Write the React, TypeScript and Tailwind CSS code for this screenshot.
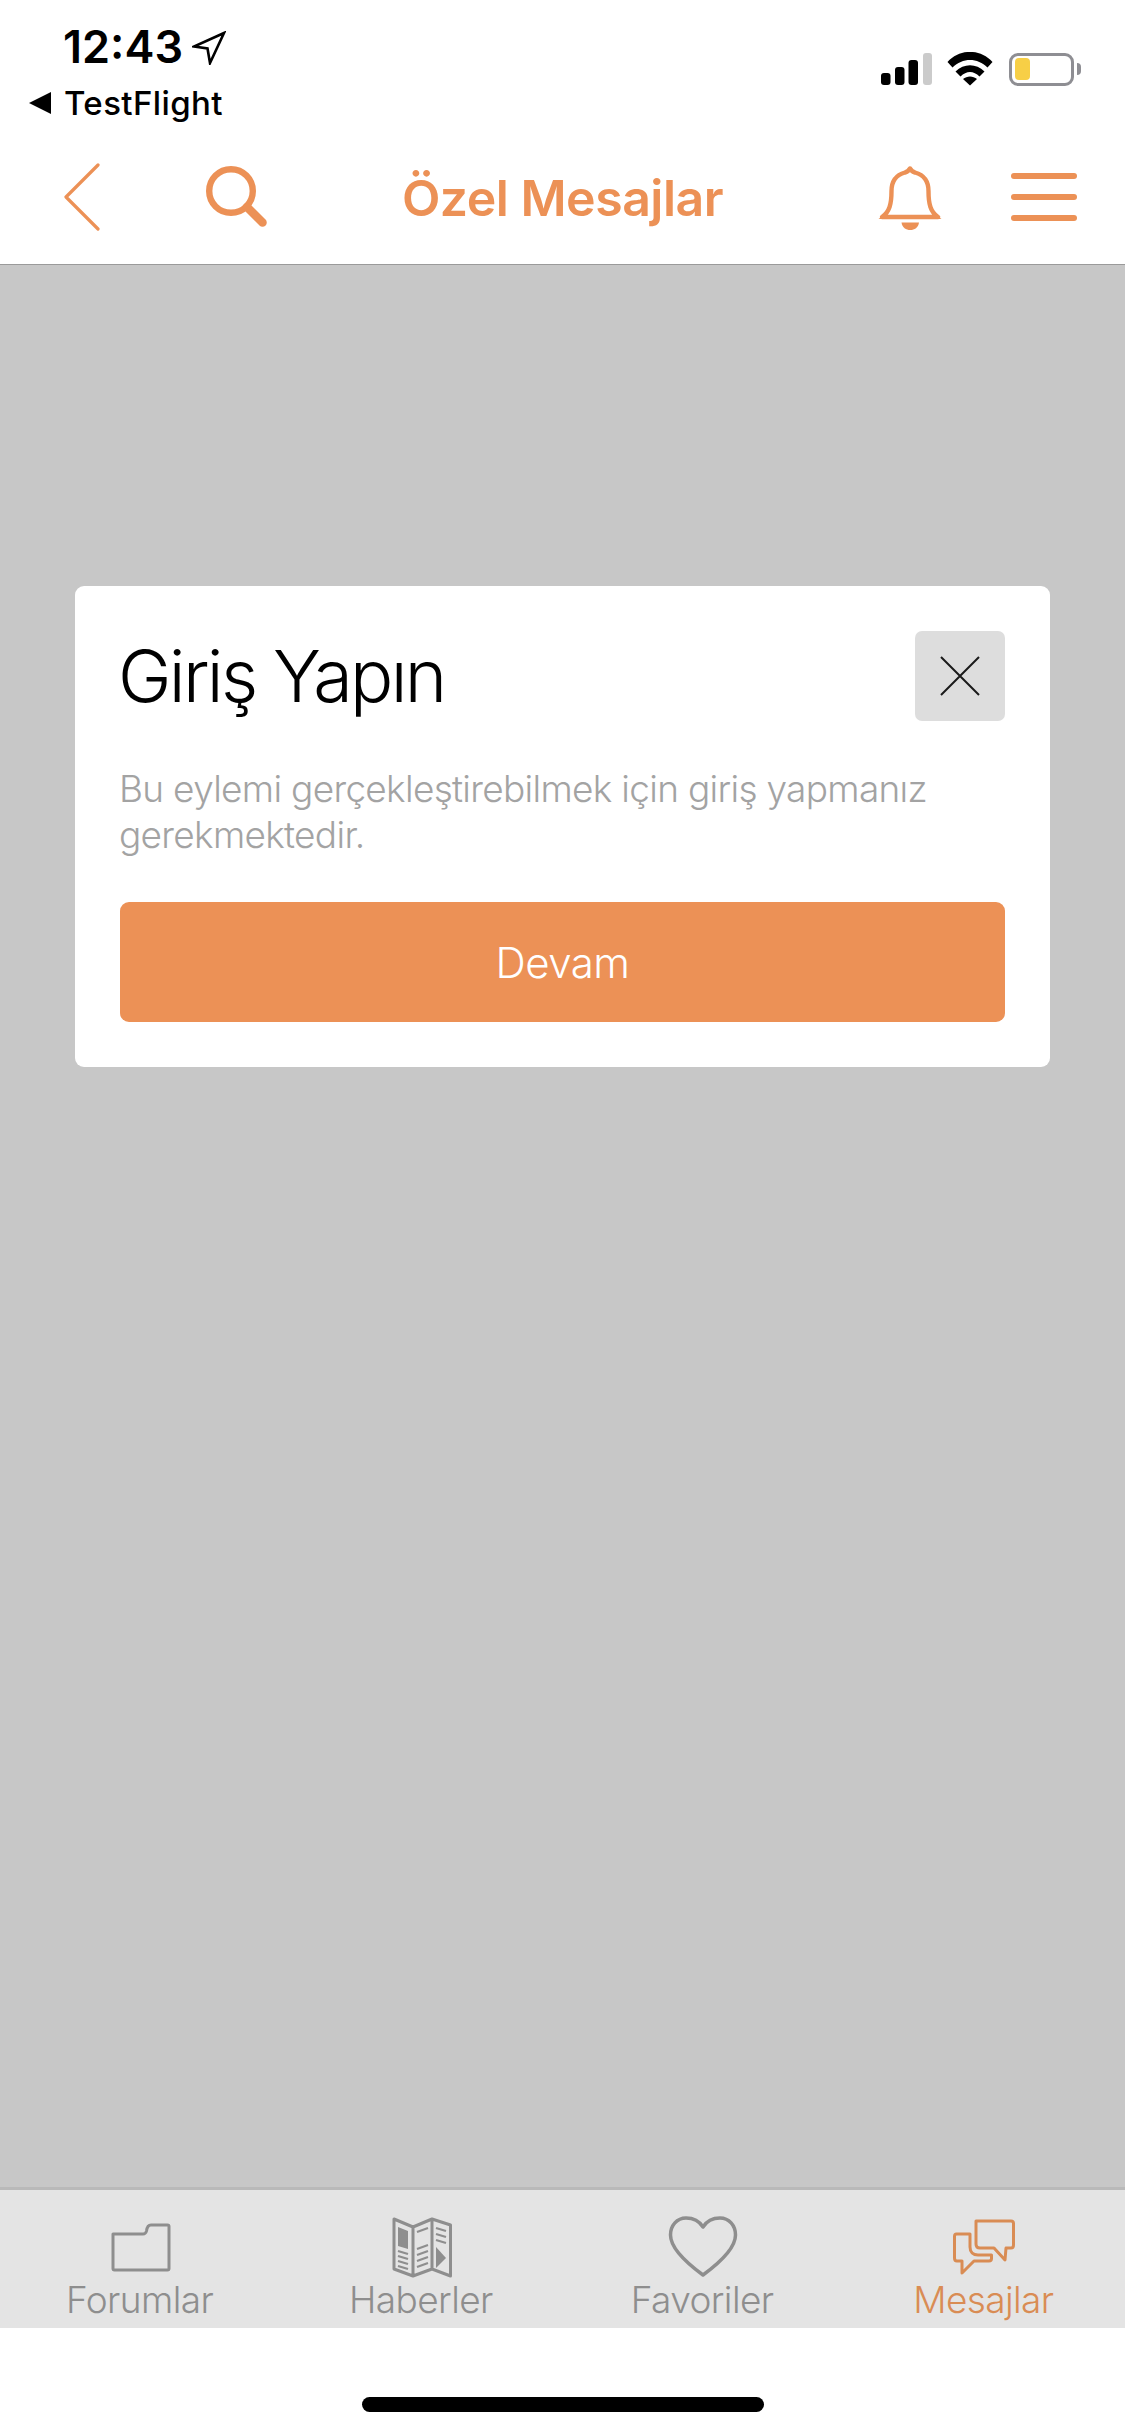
const orange = '#ec9156';

function LocationArrow() {
  return (
    <svg width="34" height="34" viewBox="0 0 34 34" className="mt-[2px] ml-[9px]">
      <path d="M32 2 L2 15.5 L15.5 17.5 L18 32 Z" fill="none" stroke="#000" strokeWidth="2.6" strokeLinejoin="miter" />
    </svg>
  );
}

function SignalIcon() {
  return (
    <svg width="51" height="32" viewBox="0 0 51 32">
      <rect x="0" y="20" width="9.5" height="12" rx="3" fill="#000" />
      <rect x="14" y="14" width="9.5" height="18" rx="3" fill="#000" />
      <rect x="27.5" y="7" width="9.5" height="25" rx="3" fill="#000" />
      <rect x="42" y="0" width="9" height="32" rx="3" fill="#cbcbcb" />
    </svg>
  );
}

function WifiIcon() {
  return (
    <svg width="46" height="34" viewBox="0 0 46 34">
      <path d="M0.500 10 C13 -3.500 33 -3.500 45.500 10 L40.500 15.500 C30.500 5.500 15.500 5.500 5.500 15.500 Z" fill="#000" />
      <path d="M8.500 19.500 C17 11 29 11 37.500 19.500 L32.500 24.500 C26.500 18.500 19.500 18.500 13.500 24.500 Z" fill="#000" />
      <path d="M16 27 C20 23.500 26 23.500 30 27 L23 33.500 Z" fill="#000" />
    </svg>
  );
}

function BatteryIcon() {
  return (
    <div className="flex items-center">
      <div className="flex h-[33px] w-[65px] items-center rounded-[9px] border-[3px] border-[#8e8e93] pl-[3px]">
        <div className="h-[22px] w-[15px] rounded-[4px] bg-[#f7cf46]" />
      </div>
      <div className="ml-[3px] h-[12px] w-[4px] rounded-r-full bg-[#8e8e93]" />
    </div>
  );
}

function BackIcon() {
  return (
    <svg width="36" height="68" viewBox="0 0 36 68">
      <path d="M34 2 L2 34 L34 66" fill="none" stroke={orange} strokeWidth="3.2" strokeLinecap="round" strokeLinejoin="round" />
    </svg>
  );
}

function SearchIcon() {
  return (
    <svg width="62" height="62" viewBox="0 0 62 62">
      <circle cx="25" cy="25" r="21.800" fill="none" stroke={orange} strokeWidth="6.400" />
      <path d="M41 41 L56.500 56.500" stroke={orange} strokeWidth="8.500" strokeLinecap="round" />
    </svg>
  );
}

function BellIcon() {
  return (
    <svg width="64" height="66" viewBox="0 0 64 66">
      <path
        d="M32 2.500 C33.500 5 35 6 37 6.500 C46 9 50.500 15 50.500 25 C50.500 38 52.500 46 60 51 L4 51 C11.500 46 13.500 38 13.500 25 C13.500 15 18 9 27 6.500 C29 6 30.500 5 32 2.500 Z"
        fill="none"
        stroke={orange}
        strokeWidth="4.400"
        strokeLinejoin="round"
      />
      <path d="M0.500 53 L63.500 53 L58 49 L6 49 Z" fill={orange} />
      <path d="M23.500 56.500 L41 56.500 C40 66.500 24.500 66.500 23.500 56.500 Z" fill={orange} />
    </svg>
  );
}

function MenuIcon() {
  return (
    <div className="flex h-[48px] w-[66px] flex-col justify-between">
      <div className="h-[6px] rounded-full bg-[#ec9156]" />
      <div className="h-[6px] rounded-full bg-[#ec9156]" />
      <div className="h-[6px] rounded-full bg-[#ec9156]" />
    </div>
  );
}

function FolderIcon() {
  return (
    <svg width="60" height="49" viewBox="0 0 60 49">
      <path
        d="M2 11 L32 11 C34 11 35 10 35.500 8 C36 4 37.500 2 40 2 L56.500 2 C57.500 2 58 2.500 58 3.500 L58 45.500 C58 46.500 57.500 47 56.500 47 L3.500 47 C2.500 47 2 46.500 2 45.500 Z"
        fill="none"
        stroke="#8e8e8e"
        strokeWidth="3"
        strokeLinejoin="round"
      />
    </svg>
  );
}

function NewsIcon() {
  return (
    <svg width="60" height="61" viewBox="0 0 60 61">
      <path d="M2 2 L21 10 L40 2 L58.500 8 L58.500 59 L40 52 L21 59 L2 52 Z M21 10 L21 59 M40 2 L40 52" fill="none" stroke="#8e8e8e" strokeWidth="3" strokeLinejoin="round" />
      <path d="M6 10 L16 14 L16 32 L6 29 Z" fill="#8e8e8e" />
      <path d="M6 34 L16 37 M6 39 L16 42 M6 44 L16 47 M6 49 L16 52 M25 15 L36 11 M25 32 L36 28 M25 38 L36 34 M25 44 L36 40 M25 50 L36 46 M44 11 L54 14 M44 17 L54 20 M44 23 L54 26" stroke="#8e8e8e" strokeWidth="2.200" />
      <path d="M44 30 L54 41 L44 51 Z" fill="#8e8e8e" />
    </svg>
  );
}

function HeartIcon() {
  return (
    <svg width="70" height="62" viewBox="0 0 70 62">
      <path
        d="M35 11 C30 3 23 2 18 2 C9 2 2.500 9.500 2.500 19 C2.500 32 20 48 35 59 C50 48 67.500 32 67.500 19 C67.500 9.500 61 2 52 2 C47 2 40 3 35 11 Z"
        fill="none"
        stroke="#8e8e8e"
        strokeWidth="3.500"
        strokeLinejoin="round"
      />
    </svg>
  );
}

function ChatIcon() {
  return (
    <svg width="62" height="56" viewBox="0 0 62 56">
      <path d="M23 2 L58 2 C60 2 60.500 3 60.500 4.500 L60.500 26 C60.500 28 59.500 29 58 29 L53 29 L52 41 L41 29 L27 29 C24.500 29 23 27.500 23 25 Z" fill="none" stroke="#d98c54" strokeWidth="3" strokeLinejoin="round" />
      <path d="M17 15 L3.500 15 C2 15 1.500 16 1.500 17.500 L1.500 39 C1.500 41 2.500 42 4 42 L9 42 L9 54 L21 42 L36 42 C38 42 38.500 41 38.500 39.500 L38.500 36 L25 36 C20 36 17 33 17 28 Z" fill="none" stroke="#d98c54" strokeWidth="3" strokeLinejoin="round" />
    </svg>
  );
}

const tabs = [
  { label: 'Forumlar', icon: <FolderIcon />, box: 'pt-[33px]', color: 'text-[#8e8e8e]' },
  { label: 'Haberler', icon: <NewsIcon />, box: 'pt-[27px]', color: 'text-[#8e8e8e]' },
  { label: 'Favoriler', icon: <HeartIcon />, box: 'pt-[26px]', color: 'text-[#8e8e8e]' },
  { label: 'Mesajlar', icon: <ChatIcon />, box: 'pt-[29px]', color: 'text-[#d98c54]' },
];

export default function App() {
  return (
    <div className="flex h-[2436px] w-[1125px] flex-col overflow-hidden bg-white font-['Inter',sans-serif]">
      <header className="h-[265px] shrink-0 border-b border-[#9a9a9a] bg-white">
        {/* status bar */}
        <div className="flex h-[130px] items-start justify-between">
          <div>
            <div className="flex items-center pl-[63px] pt-[23px]">
              <span className="text-[45px] leading-[48px] font-semibold text-black">12:43</span>
              <LocationArrow />
            </div>
            <div className="flex items-center pl-[29px] pt-[13px]">
              <span className="h-0 w-0 border-y-[11px] border-r-[22px] border-y-transparent border-r-black" />
              <span className="ml-[13px] text-[33px] leading-[38px] font-medium tracking-[0.4px] text-black">TestFlight</span>
            </div>
          </div>
          <div className="flex items-center pt-[52px] pr-[44px]">
            <SignalIcon />
            <div className="ml-[15px]">
              <WifiIcon />
            </div>
            <div className="ml-[16px]">
              <BatteryIcon />
            </div>
          </div>
        </div>
        {/* nav bar */}
        <div className="grid h-[134px] grid-cols-[1fr_auto_1fr] items-start">
          <div className="flex items-start pl-[64px] pt-[33px]">
            <BackIcon />
            <div className="ml-[106px] pt-[3px]">
              <SearchIcon />
            </div>
          </div>
          <h1 className="pt-[33px] text-[50px] leading-[70px] font-semibold tracking-[-0.5px] text-[#ec9156]">Özel Mesajlar</h1>
          <div className="flex items-start justify-end pr-[48px] pt-[36px]">
            <BellIcon />
            <div className="ml-[69px] pt-[7px]">
              <MenuIcon />
            </div>
          </div>
        </div>
      </header>

      <main className="flex-1 bg-[#c7c7c7] px-[75px] pt-[321px]">
        <div className="rounded-[9px] bg-white p-[45px]">
          <div className="flex items-start justify-between">
            <h2 className="-ml-[2px] pt-[3px] text-[72px] leading-[84px] font-light tracking-[-2.7px] text-black">Giriş Yapın</h2>
            <button className="flex h-[90px] w-[90px] items-center justify-center rounded-[7px] bg-[#dddddd]">
              <svg width="42" height="42" viewBox="0 0 42 42">
                <path d="M2 2 L40 40 M40 2 L2 40" stroke="#1a1a1a" strokeWidth="2" />
              </svg>
            </button>
          </div>
          <p className="-ml-[1px] mt-[45px] text-[37px] leading-[46px] font-light tracking-[-0.7px] text-[#a3a3a3]">
            Bu eylemi gerçekleştirebilmek için giriş yapmanız gerekmektedir.
          </p>
          <button className="mt-[44px] flex h-[120px] w-full items-center justify-center rounded-[9px] bg-[#ec9156] text-[42px] font-light tracking-[-0.5px] text-white">
            Devam
          </button>
        </div>
      </main>

      <nav className="grid h-[141px] shrink-0 grid-cols-4 border-t-[3px] border-[#b9b9b9] bg-[#e4e4e4]">
        {tabs.map((t) => (
          <div key={t.label} className={`flex h-[138px] flex-col items-center ${t.box}`}>
            <div className="flex-1">{t.icon}</div>
            <span className={`-ml-[2px] pb-[6px] text-[37px] leading-[44px] font-light tracking-[-0.6px] ${t.color}`}>{t.label}</span>
          </div>
        ))}
      </nav>
      <div className="flex h-[108px] shrink-0 justify-center bg-white pt-[69px]">
        <div className="h-[15px] w-[402px] rounded-full bg-black" />
      </div>
    </div>
  );
}
